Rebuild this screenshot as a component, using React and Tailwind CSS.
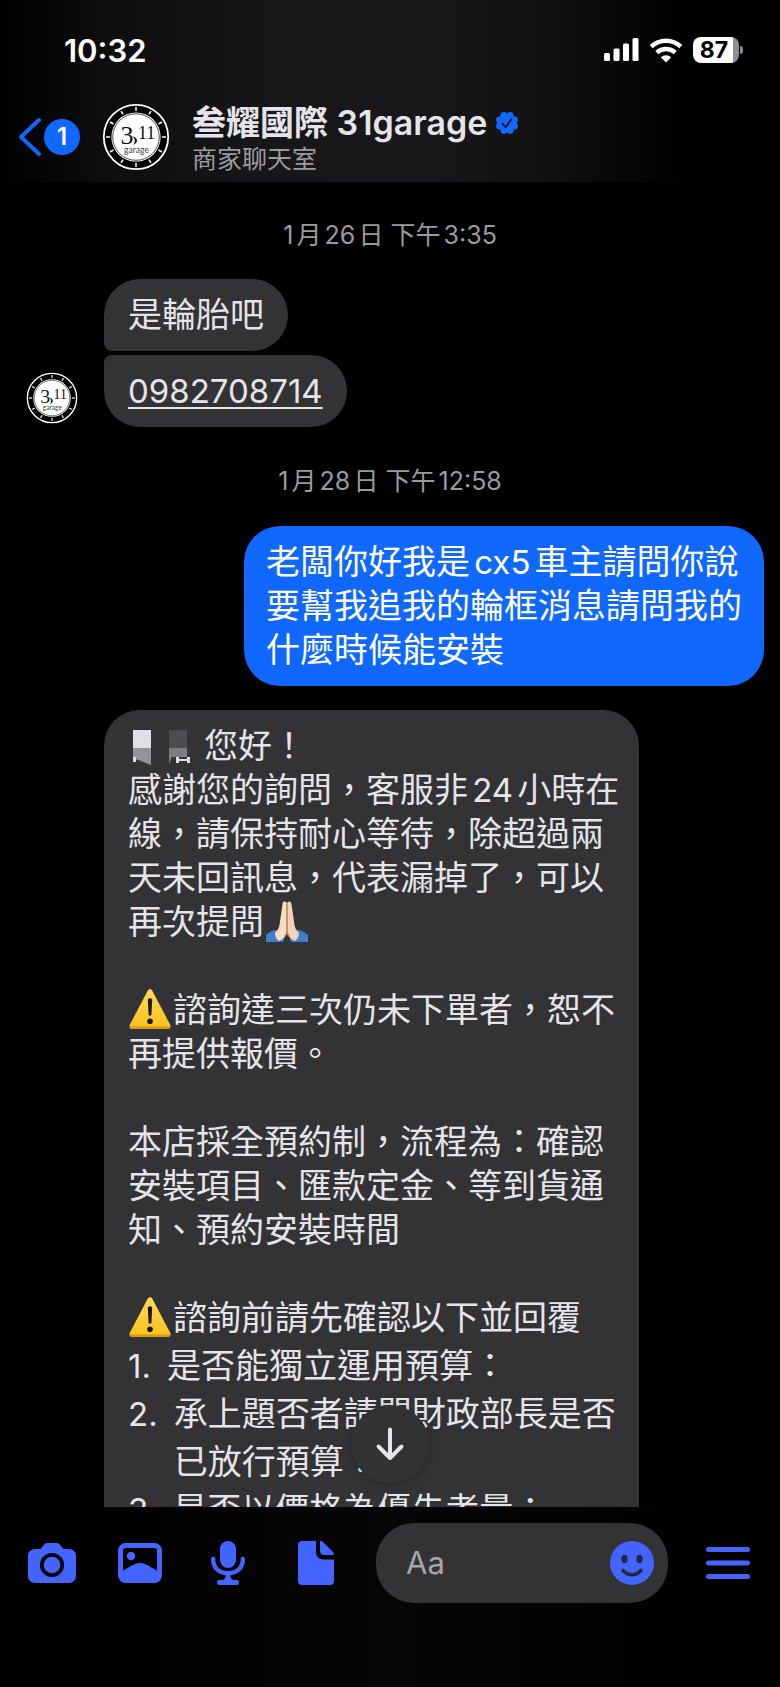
import { useState } from "react";

const HEADER_GLOW = "bg-[linear-gradient(90deg,#000000_0%,#0e0e0f_14%,#171719_35%,#18181a_55%,#111112_70%,#000000_88%)]";

function GarageLogo({ className }) {
  const ticks = Array.from({ length: 12 }, (_, i) => i * 30);
  return (
    <svg viewBox="0 0 68 68" className={className} role="img" aria-label="31garage">
      <circle cx="34" cy="34" r="33.5" fill="#000" />
      <circle cx="34" cy="34" r="32.2" fill="none" stroke="#fff" strokeWidth="1.8" />
      {ticks.map((deg) => (
        <line key={deg} x1="34" y1="4" x2="34" y2="8" stroke="#fff" strokeWidth="1.5" transform={`rotate(${deg} 34 34)`} />
      ))}
      <circle cx="34" cy="34" r="24.6" fill="#fff" />
      <circle cx="34" cy="34" r="23.3" fill="none" stroke="#000" strokeWidth="0.7" />
      <g fill="#111" fontFamily="Liberation Serif, serif">
        <text x="18.500" y="40.500" fontSize="26">3</text>
        <path d="M30.500 33c6 2 6 7 .5 9 2.500-2.500 2.500-6-.5-9z" />
        <text x="36" y="35.500" fontSize="18">11</text>
      </g>
      <text x="34.500" y="50" fontSize="8.600" fill="#444" textAnchor="middle" fontFamily="Lato, sans-serif">garage</text>
    </svg>
  );
}

function SignalIcon() {
  return (
    <svg viewBox="0 0 35 24" className="h-6 w-[35px]" fill="#fff" aria-hidden="true">
      <rect x="0" y="15" width="6" height="8" rx="1.500" />
      <rect x="9.500" y="10.500" width="6" height="12.500" rx="1.500" />
      <rect x="19" y="5.500" width="6" height="17.500" rx="1.500" />
      <rect x="28.500" y="0" width="6" height="23" rx="1.500" />
    </svg>
  );
}

function WifiIcon() {
  return (
    <svg viewBox="0 0 34 25" className="h-[25px] w-[34px]" aria-hidden="true">
      <g fill="none" stroke="#fff" strokeWidth="4.400">
        <path d="M2.200 8.600a21.500 21.500 0 0 1 29.600 0" />
        <path d="M7.800 14.600a13.500 13.500 0 0 1 18.400 0" />
      </g>
      <path d="M17 24.500l-5.200-5.200a7.600 7.600 0 0 1 10.400 0z" fill="#fff" />
    </svg>
  );
}

function Battery() {
  return (
    <div className="flex items-center gap-px">
      <div className="flex h-[26px] w-[46px] items-center justify-center overflow-hidden rounded-lg bg-[linear-gradient(90deg,#ffffff_86%,#8e8e93_86%)] pr-1 text-[23px] leading-none font-bold text-black">
        87
      </div>
      <div className="h-2 w-[3px] rounded-r-full bg-[#8e8e93]" />
    </div>
  );
}

function VerifiedIcon() {
  const petals = Array.from({ length: 8 }, (_, i) => (i * Math.PI) / 4 + Math.PI / 8);
  return (
    <svg viewBox="0 0 24 24" className="size-6" role="img" aria-label="已驗證">
      <g fill="#1168ff">
        <circle cx="12" cy="12" r="9.500" />
        {petals.map((a) => (
          <circle key={a} cx={12 + 8.2 * Math.cos(a)} cy={12 + 8.2 * Math.sin(a)} r="3.300" />
        ))}
      </g>
      <path d="M7.500 12.800l3.200 3.400 5.600-8" fill="none" stroke="#171719" strokeWidth="1.900" strokeLinecap="round" strokeLinejoin="round" />
    </svg>
  );
}

function PrayEmoji() {
  return (
    <svg viewBox="0 0 42 42" className="mx-0.5 inline-block size-[42px] align-[-9px]" role="img" aria-label="🙏">
      <path d="M0 41V34c3-3 7-5 11-5l7 6v5l-3 1z" fill="#3f7fca" />
      <path d="M42 41V34c-3-3-7-5-11-5l-7 6v5l3 1z" fill="#3f7fca" />
      <path d="M18.500 0.500c1.800 0 2.500 1.500 2.500 3.500V33c-2 3-5 6-8 7-3-2-4-5-4-8 2-2 4-5 4.500-8L16.500 3c.2-1.500.8-2.500 2-2.500z" fill="#f9dcc3" />
      <path d="M23.500 0.500c-1.800 0-2.500 1.500-2.500 3.500V33c2 3 5 6 8 7 3-2 4-5 4-8-2-2-4-5-4.500-8L25.500 3c-.2-1.500-.8-2.500-2-2.500z" fill="#f6d0b2" />
      <path d="M21 3V31c0 2-1 3-2 4M21 31c0 2 1 3 2 4" fill="none" stroke="#a87452" strokeWidth="1.300" />
    </svg>
  );
}

function WarningEmoji() {
  return (
    <svg viewBox="0 0 42 42" className="mr-0.5 ml-px inline-block size-[42px] align-[-8px]" role="img" aria-label="⚠️">
      <defs>
        <linearGradient id="warn" x1="0" y1="0" x2="0" y2="1">
          <stop offset="0" stopColor="#fddc53" />
          <stop offset="1" stopColor="#fbc11c" />
        </linearGradient>
      </defs>
      <path d="M18.800 2.500Q21 -0.500 23.200 2.500L41.300 37Q42.300 40.500 39 41H3Q-.3 40.500.7 37z" fill="url(#warn)" />
      <path d="M.9 38.500Q1 40.500 3 41H39Q41 40.500 41.100 38.500z" fill="#d99a1b" />
      <path d="M18.800 11.500Q21 9 23.200 11.500L22.400 27Q21 28.600 19.600 27z" fill="#1d1508" />
      <circle cx="21" cy="33.300" r="2.800" fill="#1d1508" />
    </svg>
  );
}

// Censored customer name
function MaskedName() {
  return (
    <svg viewBox="0 0 68 40" className="mr-2 inline-block h-10 w-[68px] align-[-9px]" role="img" aria-label="已遮蔽">
      <path d="M5 3h18v18H5z" fill="#dfdfe5" />
      <path d="M5 21h18v17L5 31z" fill="#929297" />
      <path d="M5 30h3v5H5z" fill="#dfdfe5" />
      <path d="M41 3h18v18H41z" fill="#4c4c50" />
      <path d="M41 21h18v9H44l-3 7z" fill="#7c7c81" />
      <path d="M48 30h3v2h8v-2h3v6h-3v-2h-8v2h-3z" fill="#dfdfe5" />
    </svg>
  );
}

function CameraIcon() {
  return (
    <svg viewBox="0 0 50 44" className="h-11 w-[50px]" aria-hidden="true">
      <path d="M8 8h4c2 0 3-1 4-3 1.500-2.500 3-3 5-3h8c2 0 3.500.5 5 3 1 2 2 3 4 3h4c4 0 7 3 7 7v20c0 4-3 7-7 7H8c-4 0-7-3-7-7V15c0-4 3-7 7-7z" fill="currentColor" />
      <circle cx="25" cy="24" r="10.200" fill="none" stroke="#040406" strokeWidth="3.800" />
    </svg>
  );
}

function PhotoIcon() {
  return (
    <svg viewBox="0 0 46 44" className="h-11 w-[46px]" aria-hidden="true">
      <rect x="3.500" y="4.500" width="39" height="35" rx="5" fill="none" stroke="currentColor" strokeWidth="5" />
      <circle cx="14" cy="15" r="4.200" fill="currentColor" />
      <path d="M4 30.500C11 28 16 22 23 22s12 6 19 8.500V39H4z" fill="currentColor" />
    </svg>
  );
}

function MicIcon() {
  return (
    <svg viewBox="0 0 36 46" className="h-[46px] w-9" aria-hidden="true">
      <rect x="10" y="1" width="16" height="27" rx="8" fill="currentColor" />
      <path d="M3.200 19v1c0 8 6.300 13.200 14.800 13.200S32.800 28 32.800 20v-1" fill="none" stroke="currentColor" strokeWidth="4.400" strokeLinecap="round" />
      <path d="M16 33h4c0 4 1 6 3 7h-10c2-1 3-3 3-7z" fill="currentColor" />
      <rect x="7" y="40" width="22" height="5" rx="2" fill="currentColor" />
    </svg>
  );
}

function FileIcon() {
  return (
    <svg viewBox="0 0 38 46" className="h-[46px] w-[38px]" fill="currentColor" aria-hidden="true">
      <path d="M5 1h14v11c0 4.500 3 7.500 7.500 7.500H37V41c0 2.500-1.500 4-4 4H5c-2.500 0-4-1.500-4-4V5c0-2.500 1.500-4 4-4z" />
      <path d="M23 2.500c0-2 1.500-2 2.500-1L36 12c1.500 1.500 1 3-.5 3H27c-2.500 0-4-1.500-4-4z" />
    </svg>
  );
}

function SmileIcon() {
  return (
    <svg viewBox="0 0 44 44" className="size-11" aria-hidden="true">
      <circle cx="22" cy="22" r="22" fill="currentColor" />
      <ellipse cx="14.500" cy="18" rx="3.200" ry="4.200" fill="#23263f" />
      <ellipse cx="29.500" cy="18" rx="3.200" ry="4.200" fill="#23263f" />
      <path d="M13 29.500c5 5.600 13 5.600 18 0" fill="none" stroke="#23263f" strokeWidth="3.600" strokeLinecap="round" />
    </svg>
  );
}

const TOOLS = [
  { id: "camera", label: "相機", icon: CameraIcon },
  { id: "photo", label: "相片", icon: PhotoIcon },
  { id: "mic", label: "語音", icon: MicIcon },
  { id: "file", label: "檔案", icon: FileIcon },
];

function Latin({ children }) {
  return <span className="text-[33px] leading-none">{children}</span>;
}

function DateLabel({ children }) {
  return <p className="text-center text-[25px] leading-9 text-[#9a9a9f]">{children}</p>;
}

function Question({ number, children }) {
  return (
    <li className="flex items-baseline gap-4">
      <Latin>{number}.</Latin>
      <span>{children}</span>
    </li>
  );
}

export default function App() {
  const [draft, setDraft] = useState("");

  return (
    <div className="flex h-screen flex-col overflow-hidden bg-black font-[Inter,'Noto_Sans_CJK_TC',sans-serif] [text-autospace:normal]">
      <header className={`shrink-0 pb-2 ${HEADER_GLOW}`}>
        {/* Status bar */}
        <div className="flex h-[100px] items-center justify-between pr-[37px] pl-16 text-white">
          <time className="text-[31px] leading-none font-semibold">10:32</time>
          <div className="flex items-center gap-[10px]">
            <SignalIcon />
            <WifiIcon />
            <Battery />
          </div>
        </div>

        {/* Chat title */}
        <div className="flex h-[74px] items-center pl-4">
          <button type="button" aria-label="返回" className="flex items-center">
            <svg viewBox="0 0 28 40" className="h-10 w-7" aria-hidden="true">
              <path d="M23 3L5 20l18 17" fill="none" stroke="#1168ff" strokeWidth="4" strokeLinecap="round" strokeLinejoin="round" />
            </svg>
            <span className="flex size-9 items-center justify-center rounded-full bg-[#1168ff] text-2xl leading-none font-semibold text-white">1</span>
          </button>
          <GarageLogo className="ml-[22px] size-[68px]" />
          <div className="ml-[22px] flex flex-col pt-2 text-[#e4e4ea]">
            <h1 className="flex items-center gap-2 text-[34px] leading-9 font-semibold">
              <span>
                <span className="leading-none font-bold">叁耀國際</span> 31garage
              </span>
              <VerifiedIcon />
            </h1>
            <p className="text-[25px] leading-9 text-[#9a9a9f]">商家聊天室</p>
          </div>
        </div>
      </header>

      <div className="relative flex min-h-0 flex-1 flex-col">
        <main className="min-h-0 flex-1 overflow-hidden pt-[35px] text-[34px] leading-[44px] text-[#e4e4ea]">
          <DateLabel>1月26日 下午3:35</DateLabel>

          <div className="mt-[26px] flex items-end pl-[26px]">
            <GarageLogo className="mb-[3px] size-[52px]" />
            <div className="ml-[26px] flex flex-col items-start gap-1">
              <p className="rounded-[36px] rounded-bl-lg bg-[#333335] px-6 py-[14px]">是輪胎吧</p>
              <p className="rounded-[36px] rounded-tl-lg bg-[#333335] px-6 py-[14px]">
                <a href="tel:0982708714" className="text-[33px] leading-none underline decoration-2 underline-offset-4">0982708714</a>
              </p>
            </div>
          </div>

          <div className="mt-9">
            <DateLabel>1月28日 下午12:58</DateLabel>
          </div>

          <div className="mt-[27px] flex justify-end pr-4">
            <p className="rounded-[36px] bg-[#1168ff] px-[22px] py-[14px] whitespace-nowrap text-white">
              老闆你好我是<Latin>cx5</Latin>車主請問你說
              <br />
              要幫我追我的輪框消息請問我的
              <br />
              什麼時候能安裝
            </p>
          </div>

          <div className="mt-6 ml-[104px] w-[535px] rounded-t-[36px] bg-[#333335] px-6 py-[14px] whitespace-nowrap">
            <p className="h-11">
              <MaskedName />
              您好！
            </p>
            <p>
              感謝您的詢問，客服非<Latin>24</Latin>小時在
              <br />
              線，請保持耐心等待，除超過兩
              <br />
              天未回訊息，代表漏掉了，可以
            </p>
            <p className="h-11">
              再次提問
              <PrayEmoji />
            </p>
            <p className="mt-11 h-11">
              <WarningEmoji />
              諮詢達三次仍未下單者，恕不
            </p>
            <p>再提供報價。</p>
            <p className="mt-11">
              本店採全預約制，流程為：確認
              <br />
              安裝項目、匯款定金、等到貨通
              <br />
              知、預約安裝時間
            </p>
            <p className="mt-11 h-11">
              <WarningEmoji />
              諮詢前請先確認以下並回覆
            </p>
            <ol className="pt-0.5 leading-[48px]">
              <Question number={1}>是否能獨立運用預算：</Question>
              <Question number={2}>
                承上題否者請問財政部長是否
                <br />
                已放行預算：
              </Question>
              <Question number={3}>是否以價格為優先考量：</Question>
            </ol>
          </div>
        </main>

        {/* Scroll to latest */}
        <button
          type="button"
          aria-label="捲動到最新訊息"
          className="absolute bottom-6 left-1/2 flex size-[78px] -translate-x-1/2 items-center justify-center rounded-full bg-[#323234] shadow-[0_2px_10px_rgba(0,0,0,0.25)]"
        >
          <svg viewBox="0 0 30 34" className="h-[34px] w-[30px]" aria-hidden="true">
            <path d="M15 2.500v28M3.500 19.500L15 31l11.500-11.500" fill="none" stroke="#e4e4ea" strokeWidth="4" strokeLinecap="round" strokeLinejoin="round" />
          </svg>
        </button>
      </div>

      {/* Composer */}
      <footer className="flex h-[180px] shrink-0 items-start bg-[linear-gradient(90deg,#000000_10%,#060607_50%,#000000_90%)] pt-4 pl-2 text-[#4364ff]">
        {TOOLS.map(({ id, label, icon: Icon }) => (
          <button key={id} type="button" aria-label={label} className="flex h-20 w-[88px] items-center justify-center">
            <Icon />
          </button>
        ))}
        <div className="ml-4 flex h-20 min-w-0 flex-1 items-center rounded-[38px] bg-[#333335] pr-[14px] pl-[30px]">
          <input
            type="text"
            aria-label="訊息"
            placeholder="Aa"
            value={draft}
            onChange={(e) => setDraft(e.target.value)}
            className="min-w-0 flex-1 bg-transparent text-[31px] text-[#e4e4ea] outline-none placeholder:text-[#a6a6ab]"
          />
          <button type="button" aria-label="表情符號">
            <SmileIcon />
          </button>
        </div>
        <button type="button" aria-label="選單" className="ml-2 flex h-20 w-[104px] items-center justify-center">
          <svg viewBox="0 0 44 32" className="h-8 w-11" aria-hidden="true">
            <path d="M2.500 2.500h39M2.500 16h39M2.500 29.500h39" stroke="currentColor" strokeWidth="5" strokeLinecap="round" />
          </svg>
        </button>
      </footer>
    </div>
  );
}
